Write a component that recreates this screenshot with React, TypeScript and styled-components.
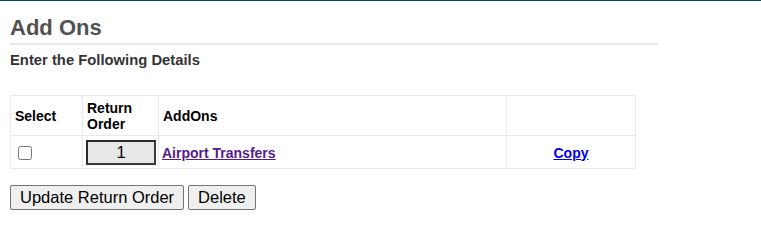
import { createGlobalStyle, styled } from 'styled-components';

const GlobalStyle = createGlobalStyle`
  body {
    margin: 0;
    background: #fff;
    font-family: "Liberation Sans", Arial, sans-serif;
    color: #000;
  }
`;

const App = () => {
  return (
    <>
      <GlobalStyle />
      <SPage>
        <SPanel>
          <STitle>Add Ons</STitle>
          <SSubTitle>Enter the Following Details</SSubTitle>
        </SPanel>
        <STable>
          <colgroup>
            <col style={{ width: 72 }} />
            <col style={{ width: 76 }} />
            <col style={{ width: 348 }} />
            <col style={{ width: 129 }} />
          </colgroup>
          <thead>
            <tr>
              <STh>Select</STh>
              <STh>
                Return
                <br />
                Order
              </STh>
              <STh>AddOns</STh>
              <STh />
            </tr>
          </thead>
          <tbody>
            <tr>
              <STd>
                <SCheckbox type="checkbox" />
              </STd>
              <STd>
                <SOrderInput type="text" defaultValue="1" readOnly />
              </STd>
              <STd>
                <SLink href="#" $visited>
                  Airport Transfers
                </SLink>
              </STd>
              <STd $center>
                <SLink href="#">Copy</SLink>
              </STd>
            </tr>
          </tbody>
        </STable>
        <SActions>
          <SButton type="button">Update Return Order</SButton>
          <SButton type="button">Delete</SButton>
        </SActions>
      </SPage>
    </>
  );
};

const SPage = styled.main`
  min-height: 220px;

  border-top: 1px solid #123e70;
  padding: 0 10px;
`;

const SPanel = styled.section`
  width: 648px;
`;

const STitle = styled.h2`
  margin: 14px 0 0;
  padding-bottom: 3px;

  border-bottom: 2px solid #e6e6e6;

  font-size: 22px;
  line-height: 25px;
  font-weight: bold;
  color: #515151;
`;

const SSubTitle = styled.h4`
  margin: 7px 0 0;

  font-size: 14.8px;
  line-height: 17px;
  font-weight: bold;
  color: #333;
`;

const STable = styled.table`
  width: 625px;
  margin-top: 26px;

  border-collapse: collapse;
  table-layout: fixed;

  font-size: 14px;
  line-height: 16px;
`;

const STh = styled.th`
  padding: 4px 4px 3px;

  border: 1px solid #e9e9e9;

  text-align: left;
  vertical-align: middle;
  font-weight: bold;
  color: #000;
`;

const STd = styled.td<{ $center?: boolean }>`
  padding: 4px 3px 3px;

  border: 1px solid #e9e9e9;

  text-align: ${props => (props.$center ? 'center' : 'left')};
  vertical-align: middle;
`;

const SCheckbox = styled.input`
  width: 14px;
  height: 14px;
  margin: 3px 3px 3px 4px;

  vertical-align: middle;
`;

const SOrderInput = styled.input`
  box-sizing: border-box;
  width: 70px;
  height: 25px;
  margin: 0;
  padding: 0 2px;

  display: block;

  background: #e8e8e8;
  border: 2px solid #3a3a3a;
  border-top-color: #2b2b2b;
  border-left-color: #2b2b2b;
  outline: none;

  font-family: "Liberation Sans", Arial, sans-serif;
  font-size: 16.5px;
  text-align: center;
  color: #000;
`;

const SLink = styled.a<{ $visited?: boolean }>`
  font-weight: bold;
  color: ${props => (props.$visited ? '#551a8b' : '#0000ee')};
  text-decoration: underline;
`;

const SActions = styled.div`
  margin-top: 16px;

  display: flex;
  gap: 4px;
`;

const SButton = styled.button`
  height: 25px;
  padding: 2px 9px;

  background: #efefef;
  border: 1px solid #767676;
  border-radius: 2px;

  font-family: "Liberation Sans", Arial, sans-serif;
  font-size: 16.5px;
  line-height: 19px;
  color: #000;
`;

export default App;
